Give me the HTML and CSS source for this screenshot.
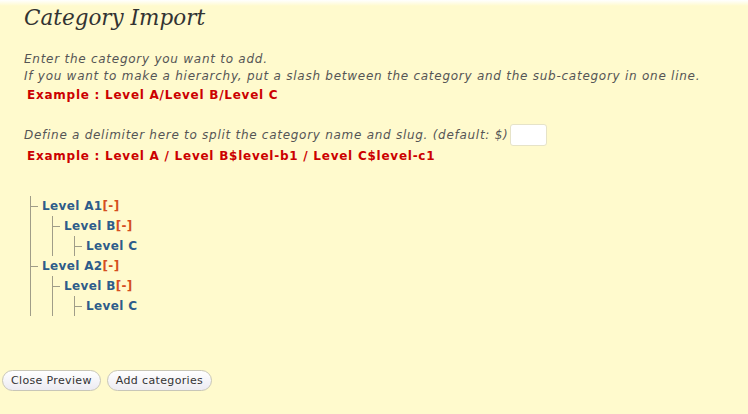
FILE: index.html
```html
<!DOCTYPE html>
<html>
<head>
<meta charset="utf-8">
<link rel="stylesheet" href="styles.css">
</head>
<body>
<div class="page">
  <h2 class="title">Category Import</h2>
  <p class="desc">Enter the category you want to add.<br>If you want to make a hierarchy, put a slash between the category and the sub-category in one line.</p>
  <p class="example">Example : Level A/Level B/Level C</p>
  <p class="desc delim">Define a delimiter here to split the category name and slug. (default: $)<input class="delim-input" type="text"></p>
  <p class="example">Example : Level A / Level B$level-b1 / Level C$level-c1</p>

  <ul class="tree">
    <li><span class="node">Level A1</span><span class="toggle">[-]</span>
      <ul>
        <li><span class="node">Level B</span><span class="toggle">[-]</span>
          <ul>
            <li><span class="node">Level C</span></li>
          </ul>
        </li>
      </ul>
    </li>
    <li><span class="node">Level A2</span><span class="toggle">[-]</span>
      <ul>
        <li><span class="node">Level B</span><span class="toggle">[-]</span>
          <ul>
            <li><span class="node">Level C</span></li>
          </ul>
        </li>
      </ul>
    </li>
  </ul>
</div>
<div class="actions">
  <button class="btn" type="button">Close Preview</button>
  <button class="btn" type="button">Add categories</button>
</div>
</body>
</html>
```
FILE: styles.css
```css
html, body {
  margin: 0;
  padding: 0;
  height: 100%;
}
body {
  background: #fffacd linear-gradient(#ffffff 0, #fffacd 6px) no-repeat;
  font-family: "DejaVu Sans", Verdana, sans-serif;
  font-size: 12px;
  color: #555;
}
.page {
  padding: 0 0 0 24px;
}
.title {
  margin: 0;
  padding-top: 4px;
  font-family: "DejaVu Serif", Georgia, serif;
  font-style: italic;
  font-weight: normal;
  font-size: 21.5px;
  line-height: 28px;
  color: #333;
}
.desc {
  margin: 19px 0 0;
  font-style: italic;
  line-height: 17px;
  letter-spacing: 0.74px;
  color: #555;
}
.example {
  margin: 2px 0 0 3px;
  font-weight: bold;
  font-size: 12px;
  line-height: 17px;
  letter-spacing: 0.75px;
  color: #cc0000;
}
.desc.delim {
  margin-top: 20px;
  line-height: 22px;
  letter-spacing: 0.72px;
  display: flex;
  align-items: center;
}
.delim-input {
  width: 37px;
  height: 22px;
  box-sizing: border-box;
  margin: 0 0 0 2px;
  border: 1px solid #e6e3c8;
  border-radius: 3px;
  background: #fff;
  padding: 0;
}
.tree {
  list-style: none;
  margin: 31px 0 0 6px;
  padding: 0;
}
.tree ul {
  list-style: none;
  margin: 0 0 0 10px;
  padding: 0;
}
.tree, .tree ul {
  border-left: 1px solid #a09d88;
}
.tree li {
  padding-left: 11px;
  line-height: 20px;
  letter-spacing: 0.35px;
  background: linear-gradient(#a09d88, #a09d88) no-repeat 0 10px / 7px 1px;
}
.node {
  font-weight: bold;
  color: #2e5c8a;
}
.toggle {
  font-weight: bold;
  color: #d54e21;
}
.actions {
  display: flex;
  gap: 6px;
  padding: 54px 0 0 2px;
}
.btn {
  font-family: "DejaVu Sans", Verdana, sans-serif;
  font-size: 11px;
  letter-spacing: 0.35px;
  color: #333;
  height: 21px;
  padding: 0 8px;
  border: 1px solid #c8c6b8;
  border-radius: 11px;
  background: linear-gradient(#ffffff, #ecebf2);
}
```
